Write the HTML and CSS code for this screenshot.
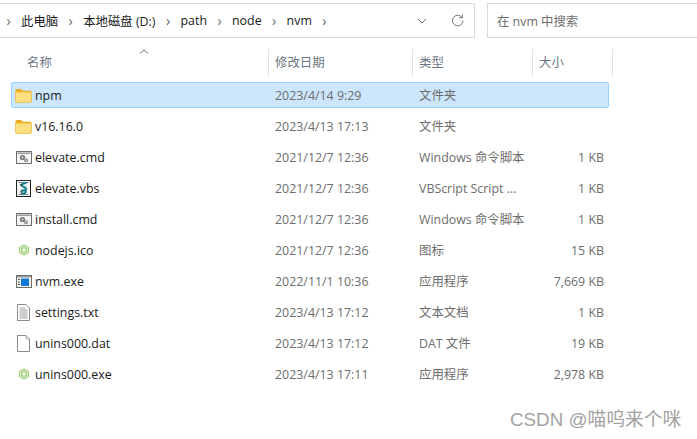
FILE: index.html
```html
<!DOCTYPE html>
<html lang="zh-CN">
<head>
<meta charset="utf-8">
<title>nvm</title>
<link rel="stylesheet" href="styles.css">
</head>
<body>
<svg class="defs" width="0" height="0" aria-hidden="true">
  <defs>
    <symbol id="folder" viewBox="0 0 17 15">
      <path d="M.5 2.500Q.5 1 2 1H6L8 3H.5Z" fill="#e8a91e"/>
      <path d="M.5 3H15Q16.500 3 16.500 4.500V13Q16.500 14.500 15 14.500H2Q.5 14.500 .5 13Z" fill="#fcdf80" stroke="#e9b53a" stroke-width=".7"/>
      <rect x="1" y="3" width="15" height="1.400" fill="#f0b429"/>
    </symbol>
    <symbol id="cmd" viewBox="0 0 16 13">
      <rect x=".5" y=".5" width="15" height="12" fill="#f4f4f4" stroke="#6f6f6f"/>
      <rect x="1.500" y="1.500" width="13" height="1.500" fill="#9a9a9a"/>
      <circle cx="6.500" cy="6.500" r="2.600" fill="#74787c"/>
      <circle cx="6.500" cy="6.500" r=".9" fill="#e8e8e8"/>
      <circle cx="10" cy="9.200" r="2" fill="#8b9095"/>
      <circle cx="10" cy="9.200" r=".7" fill="#e8e8e8"/>
    </symbol>
    <symbol id="vbs" viewBox="0 0 15 17">
      <rect x=".5" y=".5" width="14" height="16" fill="#f6f6f6" stroke="#222"/>
      <path d="M2.500 2.500H12.500M2.500 14.500H12.500" stroke="#888"/>
      <path d="M10.500 3C5 3.500 4 5.500 8 7S10 11 5 10.500M5 14C9 14 11 12 9 10" fill="none" stroke="#12808f" stroke-width="2"/>
      <path d="M4 5H6M4 12H7" stroke="#222" stroke-width="1.200"/>
    </symbol>
    <symbol id="node" viewBox="0 0 12 12">
      <path d="M6 .8 10.600 3.400V8.600L6 11.200 1.400 8.600V3.400Z" fill="#cfe8b8" stroke="#9ccb7f" stroke-width="1"/>
      <path d="M6 3.500 8.200 4.800V7.200L6 8.500 3.800 7.200V4.800Z" fill="#f2f9ea" stroke="#86bf66" stroke-width=".9"/>
    </symbol>
    <symbol id="exe" viewBox="0 0 16 13">
      <rect x=".5" y=".5" width="15" height="12" fill="#f2f2f2" stroke="#6d6d6d"/>
      <rect x="1" y="1" width="14" height="1.500" fill="#9c9c9c"/>
      <rect x="5" y="3.500" width="8" height="7.500" fill="#1177d4"/>
      <rect x="2" y="4" width="2" height="1" fill="#555"/>
      <rect x="2" y="6.500" width="2" height="1" fill="#555"/>
      <rect x="2" y="9" width="2" height="1" fill="#555"/>
    </symbol>
    <symbol id="txt" viewBox="0 0 13 17">
      <path d="M.5 .5H9L12.500 4V16.500H.5Z" fill="#fff" stroke="#8a8a8a"/>
      <path d="M2.500 4H8M2.500 6H10.500M2.500 8H10.500M2.500 10H10.500M2.500 12H10.500M2.500 14H10.500" stroke="#9c9c9c"/>
    </symbol>
    <symbol id="dat" viewBox="0 0 13 17">
      <path d="M.5 .5H9L12.500 4V16.500H.5Z" fill="#fff" stroke="#8a8a8a"/>
      <path d="M9 .5V4H12.500" fill="none" stroke="#b5b5b5"/>
    </symbol>
  </defs>
</svg>
<div class="window">
  <div class="toolbar">
    <div class="address">
      <nav class="crumbs">
        <span class="sep">›</span><span>此电脑</span>
        <span class="sep">›</span><span>本地磁盘 (D:)</span>
        <span class="sep">›</span><span>path</span>
        <span class="sep">›</span><span>node</span>
        <span class="sep">›</span><span>nvm</span>
        <span class="sep">›</span>
      </nav>
      <svg class="chev" width="10" height="6" viewBox="0 0 10 6"><path d="M1 1 5 5 9 1" fill="none" stroke="#666"/></svg>
      <svg class="refresh" width="13" height="13" viewBox="0 0 13 13"><path d="M10.800 3.200A5.300 5.300 0 1 0 12 6.500" fill="none" stroke="#777" stroke-width="1"/><path d="M11.500 .5V3.700H8.300" fill="none" stroke="#777" stroke-width="1"/></svg>
    </div>
    <div class="search">在 nvm 中搜索</div>
  </div>
  <div class="table">
    <div class="head">
      <div class="hcell name-h">名称<span class="sort"><svg width="10" height="5" viewBox="0 0 10 5"><path d="M1 4.500 5 1 9 4.500" fill="none" stroke="#777"/></svg></span></div>
      <div class="hcell">修改日期</div>
      <div class="hcell">类型</div>
      <div class="hcell">大小</div>
    </div>
    <div class="row selected"><div class="name"><svg class="ic ic-folder"><use href="#folder"/></svg>npm</div><div class="cell">2023/4/14 9:29</div><div class="cell">文件夹</div><div class="size"></div></div>
    <div class="row"><div class="name"><svg class="ic ic-folder"><use href="#folder"/></svg>v16.16.0</div><div class="cell">2023/4/13 17:13</div><div class="cell">文件夹</div><div class="size"></div></div>
    <div class="row"><div class="name"><svg class="ic ic-cmd"><use href="#cmd"/></svg>elevate.cmd</div><div class="cell">2021/12/7 12:36</div><div class="cell">Windows 命令脚本</div><div class="size">1 KB</div></div>
    <div class="row"><div class="name"><svg class="ic ic-vbs"><use href="#vbs"/></svg>elevate.vbs</div><div class="cell">2021/12/7 12:36</div><div class="cell">VBScript Script ...</div><div class="size">1 KB</div></div>
    <div class="row"><div class="name"><svg class="ic ic-cmd"><use href="#cmd"/></svg>install.cmd</div><div class="cell">2021/12/7 12:36</div><div class="cell">Windows 命令脚本</div><div class="size">1 KB</div></div>
    <div class="row"><div class="name"><svg class="ic ic-node"><use href="#node"/></svg>nodejs.ico</div><div class="cell">2021/12/7 12:36</div><div class="cell">图标</div><div class="size">15 KB</div></div>
    <div class="row"><div class="name"><svg class="ic ic-cmd"><use href="#exe"/></svg>nvm.exe</div><div class="cell">2022/11/1 10:36</div><div class="cell">应用程序</div><div class="size">7,669 KB</div></div>
    <div class="row"><div class="name"><svg class="ic ic-vbs"><use href="#txt"/></svg>settings.txt</div><div class="cell">2023/4/13 17:12</div><div class="cell">文本文档</div><div class="size">1 KB</div></div>
    <div class="row"><div class="name"><svg class="ic ic-vbs"><use href="#dat"/></svg>unins000.dat</div><div class="cell">2023/4/13 17:12</div><div class="cell">DAT 文件</div><div class="size">19 KB</div></div>
    <div class="row"><div class="name"><svg class="ic ic-node"><use href="#node"/></svg>unins000.exe</div><div class="cell">2023/4/13 17:11</div><div class="cell">应用程序</div><div class="size">2,978 KB</div></div>
  </div>
</div>
<div class="watermark">CSDN @喵呜来个咪</div>
</body>
</html>
```
FILE: styles.css
```css
* { box-sizing: border-box; }
html, body { margin: 0; padding: 0; height: 100%; background: #fff; overflow: hidden; }
body {
  position: relative;
  font-family: "Open Sans", "Noto Sans CJK SC", sans-serif;
  font-size: 12.4px;
  color: #666;
}
.defs { position: absolute; }
.toolbar {
  display: flex;
  gap: 12px;
  padding-top: 3px;
  height: 49px;
}
.address {
  width: 477px;
  height: 35px;
  margin-left: -2px;
  border: 1px solid #d9d9d9;
  display: flex;
  align-items: center;
}
.crumbs { display: flex; align-items: center; color: #1a1a1a; flex: 1; margin-left: -3px; white-space: nowrap; }
.sep { color: #666; width: 25px; text-align: center; font-size: 14px; line-height: 14px; }
.chev { margin-right: 24px; }
.refresh { margin-right: 10px; }
.search {
  flex: 1;
  height: 35px;
  margin-right: -2px;
  border: 1px solid #d9d9d9;
  display: flex;
  align-items: center;
  padding-left: 9px;
  color: #6d6d6d;
}
.head { display: grid; margin-left: 11px; width: 602px; grid-template-columns: 258px 144px 120px 80px; height: 27px; margin-bottom: 6px; }
.hcell {
  border-right: 1px solid #e3e3e3;
  padding-left: 6px;
  line-height: 28px;
  color: #6b7784;
  position: relative;
}
.name-h { padding-left: 16px; }
.sort { position: absolute; left: 128px; top: 0; line-height: 5px; }
.sort svg { display: block; }
.row {
  display: grid;
  grid-template-columns: 257px 144px 120px 71px;
  margin-left: 11px;
  width: 598px;
  height: 26px;
  margin-bottom: 5px;
  align-items: center;
  border: 1px solid transparent;
  color: #6d6d6d;
}
.row.selected { background: #cbe6fd; border-color: #99d1ff; border-radius: 2px; }
.name { display: flex; align-items: center; color: #1a1a1a; white-space: nowrap; padding-left: 3px; }
.cell { white-space: nowrap; padding-left: 6px; }
.size { text-align: right; white-space: nowrap; }
.ic { flex: none; margin-right: 3px; }
.ic-folder { width: 17px; height: 15px; }
.ic-cmd { width: 16px; height: 13px; margin-left: 1px; margin-right: 3px; }
.ic-vbs { width: 15px; height: 17px; margin-left: 1px; margin-right: 4px; }
.ic-node { width: 12px; height: 12px; margin-left: 3px; margin-right: 5px; }
.watermark {
  position: absolute;
  left: 510px;
  top: 408px;
  font-size: 18.8px;
  line-height: 24px;
  color: #a3a3a3;
  white-space: nowrap;
  font-family: "Liberation Sans", "Noto Sans CJK SC", sans-serif;
}
```
